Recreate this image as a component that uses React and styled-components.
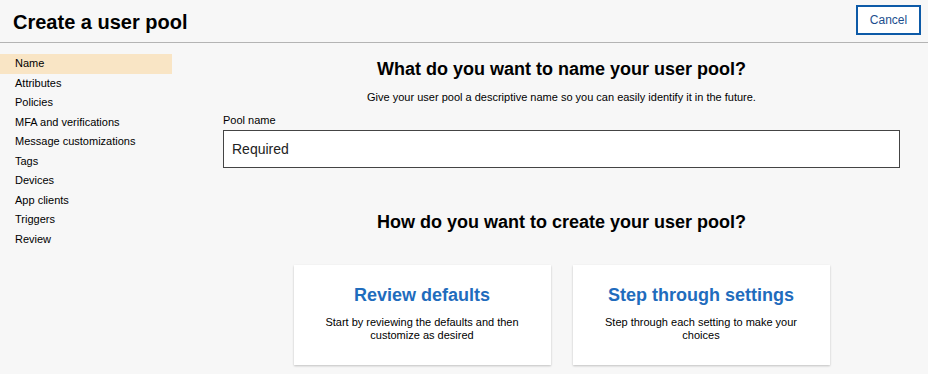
import React from 'react';
import styled, { createGlobalStyle } from 'styled-components';

const GlobalStyle = createGlobalStyle`
  body {
    margin: 0;
    background: #f7f7f7;
    font-family: "Liberation Sans", Arial, sans-serif;
    color: #000;
  }
`;

const navItems = [
  'Name',
  'Attributes',
  'Policies',
  'MFA and verifications',
  'Message customizations',
  'Tags',
  'Devices',
  'App clients',
  'Triggers',
  'Review',
];

const App = () => {
  return (
    <>
      <GlobalStyle />
      <Page>
        <Header>
          <Title>Create a user pool</Title>
          <CancelButton>Cancel</CancelButton>
        </Header>
        <Body>
          <Sidebar>
            {navItems.map((item, i) => (
              <NavItem key={item} $active={i === 0}>
                {item}
              </NavItem>
            ))}
          </Sidebar>
          <Main>
            <Heading>What do you want to name your user pool?</Heading>
            <Hint>Give your user pool a descriptive name so you can easily identify it in the future.</Hint>
            <Label>Pool name</Label>
            <Input placeholder="Required" />
            <SecondHeading>How do you want to create your user pool?</SecondHeading>
            <Cards>
              <Card>
                <CardTitle>Review defaults</CardTitle>
                <CardText>Start by reviewing the defaults and then customize as desired</CardText>
              </Card>
              <Card>
                <CardTitle>Step through settings</CardTitle>
                <CardText>Step through each setting to make your choices</CardText>
              </Card>
            </Cards>
          </Main>
        </Body>
      </Page>
    </>
  );
};

export default App;

const Page = styled.div`
  width: 928px;
  height: 374px;
  overflow: hidden;
`;

const Header = styled.header`
  height: 43px;
  display: flex;
  align-items: center;
  justify-content: space-between;
  padding: 0 7px 0 13px;
  border-bottom: 1px solid #b4b4b4;
  box-sizing: border-box;
`;

const Title = styled.h1`
  margin: 2px 0 0;
  font-size: 20px;
  font-weight: bold;
`;

const CancelButton = styled.button`
  width: 65px;
  height: 30px;
  margin-top: -2px;
  background: #fff;
  border: 2px solid #0d5aa7;
  color: #1b4e8e;
  font-family: "Liberation Sans", Arial, sans-serif;
  font-size: 12px;
  padding: 0;
`;

const Body = styled.div`
  display: flex;
`;

const Sidebar = styled.nav`
  width: 172px;
  padding-top: 11px;
  flex-shrink: 0;
`;

const NavItem = styled.div`
  height: 19.5px;
  line-height: 19.5px;
  padding-left: 15px;
  font-size: 11px;
  background: ${(p) => (p.$active ? '#f9e5c5' : 'transparent')};
`;

const Main = styled.main`
  width: 677px;
  margin-left: 51px;
  display: flex;
  flex-direction: column;
  align-items: center;
`;

const Heading = styled.h2`
  margin: 15px 0 0;
  font-size: 18px;
  line-height: 22px;
  font-weight: bold;
`;

const SecondHeading = styled(Heading)`
  margin-top: 43px;
`;

const Hint = styled.p`
  margin: 11px 0 0;
  font-size: 11px;
  line-height: 13px;
`;

const Label = styled.label`
  align-self: stretch;
  margin-top: 10px;
  font-size: 11px;
  line-height: 13px;
`;

const Input = styled.input`
  align-self: stretch;
  box-sizing: border-box;
  height: 38px;
  margin-top: 3px;
  border: 1px solid #444;
  background: #fff;
  padding: 0 8px;
  font-family: "Liberation Sans", Arial, sans-serif;
  font-size: 14px;
  outline: none;

  &::placeholder {
    color: #222;
  }
`;

const Cards = styled.div`
  display: flex;
  gap: 22px;
  margin-top: 32px;
`;

const Card = styled.div`
  width: 257px;
  height: 100px;
  box-sizing: border-box;
  background: #fff;
  box-shadow: 0 1px 2px rgba(0, 0, 0, 0.22);
  padding: 19px 30px 0;
  text-align: center;
`;

const CardTitle = styled.div`
  color: #1f6cbd;
  font-size: 18px;
  line-height: 22px;
  font-weight: bold;
`;

const CardText = styled.p`
  margin: 10px 0 0;
  font-size: 11px;
  line-height: 13px;
`;
